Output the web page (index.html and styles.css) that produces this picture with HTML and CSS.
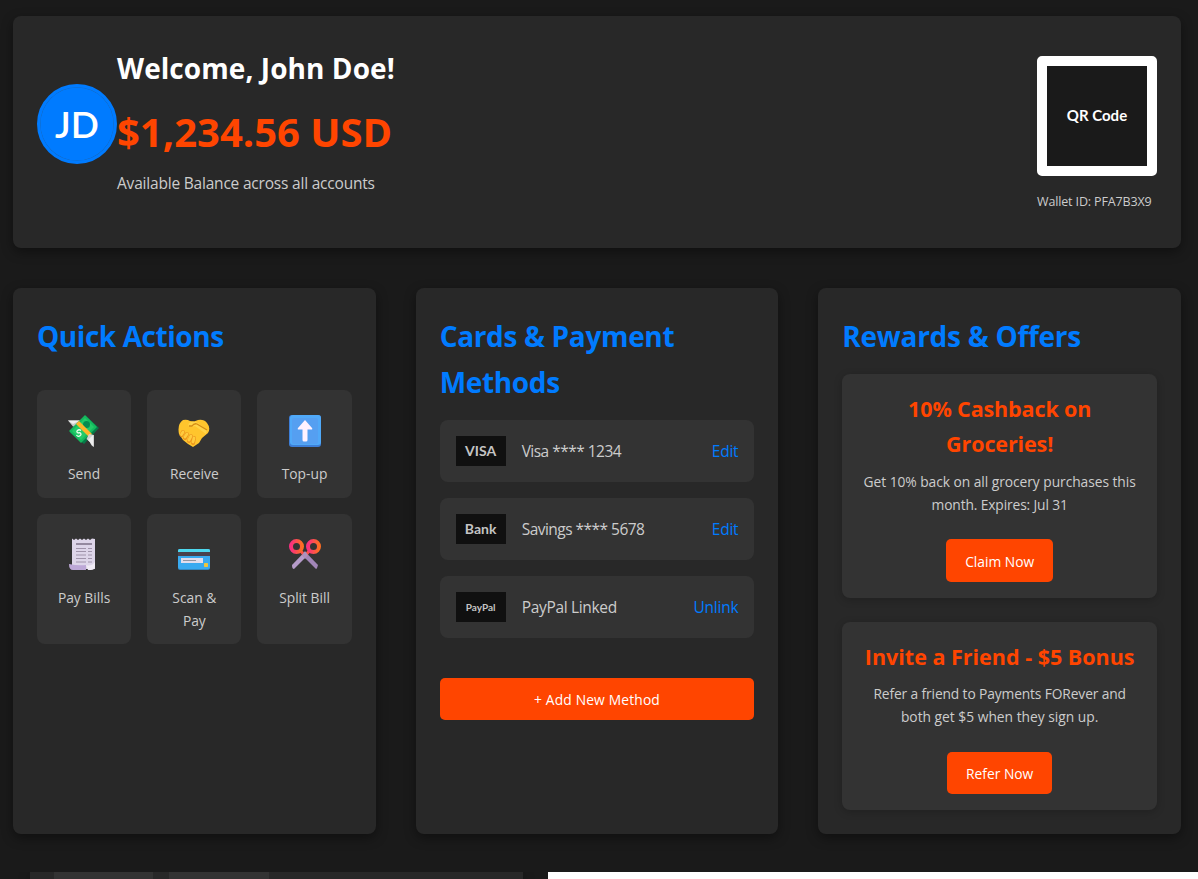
FILE: index.html
```html
<!DOCTYPE html>
<html lang="en">
<head>
<meta charset="utf-8">
<title>Payments FORever</title>
<link rel="stylesheet" href="styles.css">
</head>
<body>
<main class="dashboard">
  <header class="card welcome">
    <div class="avatar"><span>JD</span></div>
    <div class="summary">
      <h1 class="greeting">Welcome, John Doe!</h1>
      <p class="balance">$1,234.56 USD</p>
      <p class="note">Available Balance across all accounts</p>
    </div>
    <div class="wallet">
      <div class="qr"><span>QR Code</span></div>
      <p class="wallet-id">Wallet ID: PFA7B3X9</p>
    </div>
  </header>

  <div class="columns">
    <section class="card">
      <h2 class="title title-actions">Quick Actions</h2>
      <div class="actions">
        <a class="action">
          <svg class="icon" viewBox="0 0 32 32"><path d="M0 5.500h13l-3 7-5-1z" fill="#c9c9c9"/><path d="M0 5.500h12l-7 3.500z" fill="#f0f0f0"/><path d="M2 17.500 18 1l13 12-15 16z" fill="#067a48"/><path d="M1 16 17 0 29 12 13 28z" fill="#14b85d"/><path d="M4 16 17 3 26 12 13 25z" fill="#22ca68"/><circle cx="18.500" cy="9.500" r="3.500" fill="#078b50"/><path d="m8 9 3-3 13 13-3 3z" fill="#fdb52a"/><path d="M18.500 24 21 19l5 1v12q-3-1-4-5z" fill="#d0d0d0"/><path d="m20 25 5-5v11z" fill="#eee"/><path d="M13 15.500q-2-1.500-3.500 0t.5 2.500l2-.3q2 1.500 0 3T8.500 20" fill="none" stroke="#eaffed" stroke-width="1.300"/></svg>
          <span>Send</span></a>
        <a class="action">
          <svg class="icon" viewBox="0 0 32 32"><path d="M5 5Q9 4 12 6l4 .5L20 5q6-1 9 3 4 5 1 10l-6 5-3 5-3 2-3 2-5-3-5-4-4-6Q-1 9 5 5z" fill="#ffc52d"/><path d="M11 8q4-3 9 0l9 7-1 4-11-8-4 1q-4 0-2-4z" fill="#ffd448"/><path d="M29 15 19 9q-3-1-5 2l-3 0" fill="none" stroke="#d58b13" stroke-width="1.300"/><path d="m5 17-1.500 3m5.500-1-2 4m6-2-2 5m5-3-1 5" stroke="#ed961d" stroke-width="4" stroke-linecap="round"/><path d="m5 17-1.500 2.500m5.500-.5-2 3m6-1-2 4m5-2-1 4" stroke="#ffcb3e" stroke-width="2.800" stroke-linecap="round"/></svg>
          <span>Receive</span></a>
        <a class="action">
          <svg class="icon" viewBox="0 0 32 32"><rect width="32" height="32" rx="3" fill="#3d7ed7"/><rect x="1" y="0" width="31" height="30" rx="3" fill="#50a9f8"/><rect x="3" y="3" width="26" height="26" rx="2" fill="#559ff1"/><path d="m16 5 7 8q1 1.500-1 1.500h-3.500V25q0 1.500-1.500 1.500h-2q-1.500 0-1.500-1.500V14.500H10q-2 0-1-1.500z" fill="#fff2ff"/></svg>
          <span>Top-up</span></a>
        <a class="action">
          <svg class="icon" viewBox="0 0 32 32"><path d="M4 .5l2 1.500 2-1.500 2 1.500 2-1.500 2 1.500 2-1.500 2 1.500 2-1.500 2 1.500 2-1.500 3 .5v30H4z" fill="#ddd5e9"/><path d="M8 6h16" stroke="#94899f" stroke-width="2"/><path d="M8 10.500h10m2 0h4M8 13.500h10m2 0h4M8 17h10m2 0h4M8 20.500h10m2 0h4M8 24h10m2 0h4" stroke="#a094ab"/><path d="M1 26q9 2 17 1v5H5q-4 0-4-6z" fill="#bda8d7"/><path d="M18 27q5 2 9-3v4q0 4-4 4h-3z" fill="#f0ebf5"/></svg>
          <span>Pay Bills</span></a>
        <a class="action">
          <svg class="icon" viewBox="0 0 32 32"><rect y="11" width="32" height="21" rx="2" fill="#3488bf"/><rect y="11" width="32" height="20" rx="2" fill="#39aaf0"/><path d="M0 14v-1q0-2 2-2h28q2 0 2 2v1z" fill="#4ed8ee"/><path d="M0 14h32v4H0z" fill="#49424d"/><path d="M3 20h22v5H3z" fill="#e1deed"/><path d="M5 22.500h13" stroke="#9295a1"/><rect x="26" y="25" width="4" height="4" rx=".7" fill="#efc63c"/></svg>
          <span>Scan &amp;<br>Pay</span></a>
        <a class="action">
          <svg class="icon" viewBox="0 0 32 32"><defs><linearGradient id="handle"><stop stop-color="#f92f80"/><stop offset="1" stop-color="#ff6d22"/></linearGradient></defs><path d="M16.500 14 29 27q-1 4-2 4L14 18z" fill="#a286b8"/><path d="M15.500 14 3 27q0 4 2 4l13-13z" fill="#b59bc9"/><path d="m11 12 5 6m5-6-5 6" stroke="#fa5147" stroke-width="3"/><circle cx="7.500" cy="8.500" r="5.500" fill="none" stroke="url(#handle)" stroke-width="4"/><circle cx="24.500" cy="8.500" r="5.500" fill="none" stroke="url(#handle)" stroke-width="4"/><path d="m16 13 3 4-3 4-3-4z" fill="#ac91be"/></svg>
          <span>Split Bill</span></a>
      </div>
    </section>

    <section class="card">
      <h2 class="title title-cards">Cards &amp; Payment<br>Methods</h2>
      <ul class="methods">
        <li class="method"><b class="logo">VISA</b><span class="name">Visa **** 1234</span><a class="link">Edit</a></li>
        <li class="method"><b class="logo">Bank</b><span class="name">Savings **** 5678</span><a class="link">Edit</a></li>
        <li class="method"><b class="logo logo-small">PayPal</b><span class="name name-plain">PayPal Linked</span><a class="link">Unlink</a></li>
      </ul>
      <button class="button button-wide">+ Add New Method</button>
    </section>

    <section class="card">
      <h2 class="title title-rewards">Rewards &amp; Offers</h2>
      <article class="offer">
        <h3>10% Cashback on<br>Groceries!</h3>
        <p>Get 10% back on all grocery purchases this<br><span class="expiry">month. Expires: Jul 31</span></p>
        <button class="button button-claim">Claim Now</button>
      </article>
      <article class="offer offer-invite">
        <h3>Invite a Friend - $5 Bonus</h3>
        <p><span class="refer-line">Refer a friend to Payments FORever and</span><br>both get $5 when they sign up.</p>
        <button class="button button-refer">Refer Now</button>
      </article>
    </section>
  </div>

  <div class="next-row">
    <div class="next-panel"><i></i><i></i></div>
    <div class="next-light"></div>
  </div>
</main>
</body>
</html>
```
FILE: styles.css
```css
* { box-sizing: border-box; margin: 0; padding: 0; }
body { width: 1198px; height: 879px; overflow: hidden; background: #1a1a1a; color: #ccc; font-family: "Open Sans", sans-serif; font-size: 16px; }
.dashboard { height: 879px; padding: 16px 17px 0 13px; overflow: hidden; }
.card { background: #282828; border-radius: 8px; padding: 24px; box-shadow: 0 4px 12px rgba(0, 0, 0, .4); }

.welcome { display: flex; height: 232px; }
.avatar { display: grid; place-items: center; width: 80px; height: 80px; margin-top: 44px; padding-bottom: 2px; border: 3px solid #007bff; border-radius: 50%; background: #007bff; box-shadow: inset 0 0 0 .5px #1769bd; color: #fff; font: 600 37px/1 Lato, sans-serif; }
.summary { flex: 1; padding-top: 5px; white-space: nowrap; }
.greeting { color: #fff; font-size: 28px; line-height: 46px; letter-spacing: .07px; }
.balance { margin-top: 9px; color: #ff4500; font-size: 40px; font-weight: 700; line-height: 64px; }
.note { margin-top: 6px; font-size: 15.500px; line-height: 26px; letter-spacing: -.2px; }
.wallet { width: 120px; padding-top: 16px; white-space: nowrap; }
.qr { display: grid; place-items: center; height: 120px; padding-bottom: 2px; border: 10px solid #fff; border-radius: 5px; background: #1a1a1a; color: #fff; font: 700 15px/1 Lato, sans-serif; }
.wallet-id { margin-top: 15px; font-size: 12.500px; line-height: 21px; letter-spacing: -.14px; }

.columns { display: grid; grid-template-columns: repeat(3, 1fr); gap: 40px; height: 546px; margin-top: 40px; }
.title { padding-top: 1px; margin-bottom: 15px; color: #007bff; font-size: 28px; line-height: 46px; white-space: nowrap; }
.title-actions { letter-spacing: -.44px; }
.title-cards { letter-spacing: -.34px; }
.title-rewards { letter-spacing: -.27px; }
.actions { display: grid; grid-template-columns: repeat(3, 1fr); grid-template-rows: 108px 130px; gap: 16px; margin-top: 31px; }
.action { display: flex; flex-direction: column; align-items: center; gap: 15px; padding-top: 25px; border-radius: 8px; background: #333; font-size: 13.800px; line-height: 23px; text-align: center; }
.action:nth-child(n+4) { gap: 16px; padding-top: 24px; }
.icon { width: 32px; height: 32px; flex: none; }

.methods { display: grid; gap: 16px; list-style: none; }
.method { display: flex; align-items: center; height: 62px; padding: 0 16px; border-radius: 8px; background: #333; font-size: 15.500px; }
.logo { display: grid; place-items: center; width: 50px; height: 30px; margin-right: 16px; background: #101010; color: #c4c4c4; font: 700 14px/1 Lato, sans-serif; }
.logo-small { padding-bottom: 1px; font-size: 10px; }
.name { letter-spacing: -.53px; }
.name-plain { letter-spacing: -.32px; }
.link { margin-left: auto; color: #007bff; letter-spacing: -.25px; }
.button { display: block; height: 42px; padding-top: 1px; border: 0; border-radius: 5px; background: #ff4500; color: #fff; font: 13.800px/41px "Open Sans", sans-serif; white-space: nowrap; }
.button-wide { width: 100%; margin-top: 40px; padding-top: 2px; line-height: 40px; letter-spacing: .16px; }

.offer { height: 224px; padding-top: 17px; border-radius: 8px; background: #333; box-shadow: 0 2px 8px rgba(0, 0, 0, .2); text-align: center; white-space: nowrap; }
.offer h3 { color: #ff4500; font-size: 21.500px; line-height: 35px; letter-spacing: -.12px; }
.offer p { margin-top: 9px; font-size: 13.800px; line-height: 23px; letter-spacing: -.05px; }
.offer .expiry, .offer .refer-line { letter-spacing: -.13px; }
.offer .button { margin: 23px auto 0; }
.offer-invite { height: 188px; margin-top: 24px; }
.offer-invite h3 { letter-spacing: 0; }
.offer-invite p { margin-top: 8px; letter-spacing: 0; }
.offer .button-claim { width: 107px; height: 43px; padding-top: 2px; }
.offer .button-refer { width: 105px; margin-top: 24px; padding-top: 2px; line-height: 40px; }

.next-row { display: flex; gap: 25px; height: 7px; margin: 38px -17px 0 17px; }
.next-panel { display: flex; gap: 16px; width: 493px; padding-left: 24px; background: #282828; box-shadow: 0 4px 12px rgba(0, 0, 0, .4); clip-path: inset(0 -20px); }
.next-panel i { width: 99px; background: #333; }
.next-panel i + i { width: 100px; }
.next-light { flex: 1; background: #fff; }
```
